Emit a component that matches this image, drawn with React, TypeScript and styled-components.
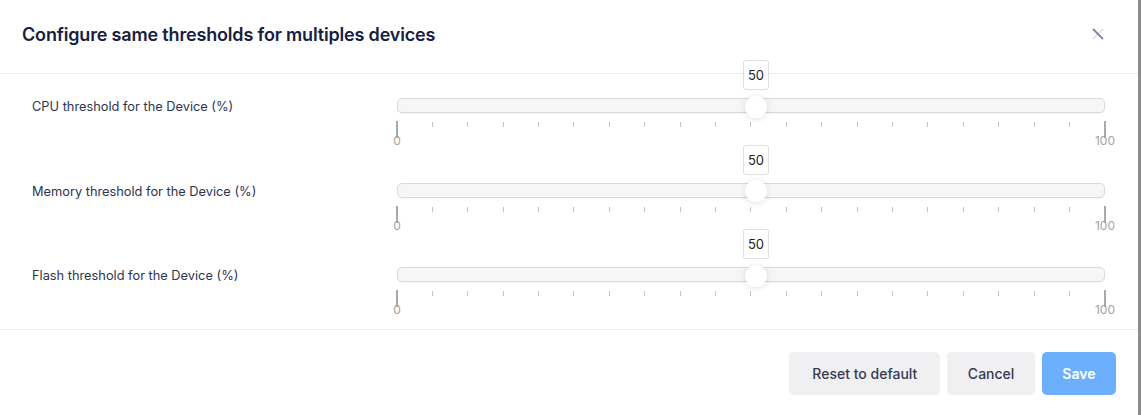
import React from "react";
import styled, { createGlobalStyle } from "styled-components";

const Global = createGlobalStyle`
  html, body { margin: 0; padding: 0; }
  body {
    background: #8c8c8c;
    font-family: Inter, "Noto Sans", Arial, sans-serif;
    -webkit-font-smoothing: antialiased;
  }
`;

const Page = styled.div`
  width: 1141px;
  height: 415px;
  display: flex;
  overflow: hidden;
`;

const Modal = styled.div`
  width: 1138px;
  height: 415px;
  background: #fff;
  display: flex;
  flex-direction: column;
`;

const Header = styled.div`
  height: 74px;
  box-sizing: border-box;
  padding: 0 33px 5px 22px;
  display: flex;
  align-items: center;
  justify-content: space-between;
  border-bottom: 1px solid #ececec;
`;

const Title = styled.h2`
  margin: 0;
  font-size: 18px;
  font-weight: 600;
  color: #18203f;
  letter-spacing: -0.17px;
`;

const CloseButton = styled.button`
  border: 0;
  background: none;
  padding: 0;
  width: 14px;
  height: 14px;
  display: flex;
  align-items: center;
  justify-content: center;
  cursor: pointer;
`;

const Body = styled.div`
  padding: 24px 33px 0 32px;
  height: 256px;
  box-sizing: border-box;
  border-bottom: 1px solid #ececec;
  display: flex;
  flex-direction: column;
  gap: 35.5px;
`;

const Row = styled.div`
  flex: none;
  display: grid;
  grid-template-columns: 365px 1fr;
  align-items: start;
`;

const Label = styled.div`
  font-size: 12.8px;
  color: #2e3450;
  line-height: 15px;
  padding-top: 1px;
`;

const SliderArea = styled.div`
  display: flex;
  flex-direction: column;
`;

const Track = styled.div`
  position: relative;
  height: 15px;
  box-sizing: border-box;
  border: 1px solid #dadada;
  border-radius: 5px;
  background: #f6f6f6;
  box-shadow: 0 1px 1px rgba(0, 0, 0, 0.04);
`;

const Thumb = styled.div`
  position: absolute;
  top: 50%;
  width: 22px;
  height: 22px;
  border-radius: 50%;
  background: #fff;
  box-shadow: 0 1px 6px rgba(0, 0, 0, 0.12);
  transform: translate(-50%, -45%);
`;

const Bubble = styled.div`
  position: absolute;
  bottom: 22px;
  width: 26px;
  height: 30px;
  box-sizing: border-box;
  border: 1px solid #dedede;
  border-radius: 3px;
  background: #fff;
  transform: translateX(-50%);
  display: flex;
  align-items: center;
  justify-content: center;
  font-size: 13px;
  color: #222;
`;

const Ticks = styled.div`
  display: flex;
  justify-content: space-between;
  margin-top: 8px;
  height: 16px;
`;

const Tick = styled.div<{ $major?: boolean }>`
  width: 0;
  display: flex;
  justify-content: center;
  align-items: flex-start;
  &::before {
    content: "";
    display: block;
    flex: none;
    width: ${(p) => (p.$major ? "2px" : "1px")};
    height: ${(p) => (p.$major ? "17px" : "5px")};
    margin-top: ${(p) => (p.$major ? "0" : "1px")};
    background: ${(p) => (p.$major ? "#a9a9a9" : "#c4c4c4")};
  }
`;

const EndLabels = styled.div`
  display: flex;
  justify-content: space-between;
  margin-top: -2px;
`;

const EndLabel = styled.div`
  width: 0;
  display: flex;
  justify-content: center;
  font-size: 12px;
  line-height: 12px;
  color: #a3a3a3;
  white-space: nowrap;
`;

const Footer = styled.div`
  display: flex;
  justify-content: flex-end;
  gap: 6.5px;
  padding: 22px 22px 0;
`;

const Button = styled.button<{ $primary?: boolean; $wide?: boolean }>`
  height: 43px;
  padding: 0 ${(p) => (p.$wide ? "23px" : p.$primary ? "20.5px" : "21px")};
  border: 0;
  border-radius: 5px;
  font-family: inherit;
  font-size: 14px;
  font-weight: ${(p) => (p.$primary ? 600 : 500)};
  background: ${(p) => (p.$primary ? "#6cb0fd" : "#f0f0f3")};
  color: ${(p) => (p.$primary ? "#fff" : "#363b52")};
  cursor: pointer;
`;

const sliders = [
  { label: "CPU threshold for the Device (%)", value: 50 },
  { label: "Memory threshold for the Device (%)", value: 50 },
  { label: "Flash threshold for the Device (%)", value: 50 },
];

function Slider({ value }: { value: number }) {
  const left = `calc(${value}% + 5px)`;
  return (
    <SliderArea>
      <Track>
        <Bubble style={{ left }}>{value}</Bubble>
        <Thumb style={{ left }} />
      </Track>
      <Ticks>
        {Array.from({ length: 21 }).map((_, i) => (
          <Tick key={i} $major={i === 0 || i === 20} />
        ))}
      </Ticks>
      <EndLabels>
        <EndLabel>0</EndLabel>
        <EndLabel>100</EndLabel>
      </EndLabels>
    </SliderArea>
  );
}

export default function App() {
  return (
    <>
      <Global />
      <Page>
        <Modal>
          <Header>
            <Title>Configure same thresholds for multiples devices</Title>
            <CloseButton aria-label="Close">
              <svg width="12" height="12" viewBox="0 0 12 12">
                <line x1="1" y1="11" x2="11" y2="1" stroke="#dfe2ea" strokeWidth="1.6" />
                <line x1="1" y1="1" x2="11" y2="11" stroke="#7d86a3" strokeWidth="1.8" />
              </svg>
            </CloseButton>
          </Header>
          <Body>
            {sliders.map((s) => (
              <Row key={s.label}>
                <Label>{s.label}</Label>
                <Slider value={s.value} />
              </Row>
            ))}
          </Body>
          <Footer>
            <Button $wide>Reset to default</Button>
            <Button>Cancel</Button>
            <Button $primary>Save</Button>
          </Footer>
        </Modal>
      </Page>
    </>
  );
}
